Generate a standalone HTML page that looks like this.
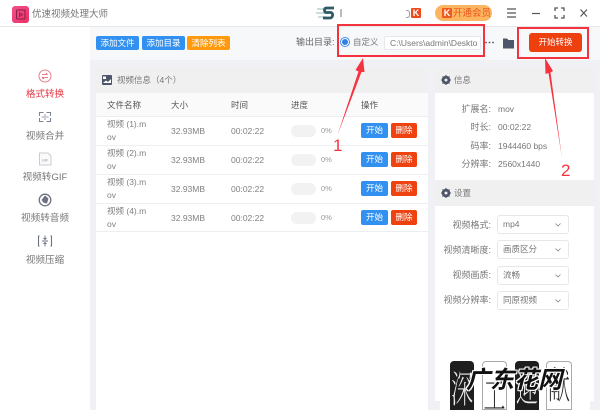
<!DOCTYPE html>
<html lang="zh">
<head>
<meta charset="utf-8">
<style>
html,body{margin:0;padding:0;width:600px;height:410px;overflow:hidden}
#w{position:absolute;left:0;top:0;width:600px;height:410px;overflow:hidden;background:#f0f1f5;font-family:"Liberation Sans","Noto Sans CJK SC",sans-serif;color:#666}
.a{position:absolute;white-space:nowrap}
.c{text-align:center}
.btn{position:absolute;color:#fff;border-radius:2px;text-align:center;white-space:nowrap}
.th{position:absolute;font-size:8.5px;color:#555;line-height:12px;white-space:nowrap}
.td{position:absolute;font-size:8.5px;color:#808080;line-height:12px;white-space:nowrap}
.sel{position:absolute;left:497px;width:70px;height:17px;background:#fff;border:1px solid #e6e7eb;border-radius:3px;box-sizing:content-box;font-size:8.5px;line-height:17px;color:#777}
.sel span{position:absolute;left:5px}
.sel svg{position:absolute;right:7px;top:7px}
.lb{position:absolute;width:91px;left:400px;text-align:right;font-size:9px;line-height:12px;color:#777;white-space:nowrap}
.v{position:absolute;left:498px;font-size:8.5px;line-height:12px;color:#777;white-space:nowrap}
.nav{position:absolute;left:0;width:90px;text-align:center;font-size:9.6px;line-height:14px;color:#777;white-space:nowrap}
.card{position:absolute;top:361px;height:49px;width:24px;border-radius:4px 4px 0 0;box-sizing:border-box;overflow:hidden;font-family:"Noto Serif CJK SC",serif;font-weight:200;text-align:center}
.card span{position:absolute;left:0;width:100%;font-size:22px;line-height:22px;transform-origin:50% 0;transform:scaleY(1.7)}
</style>
</head>
<body>
<div id="w">
<!-- title bar -->
<div class="a" style="left:0;top:0;width:600px;height:26px;background:#fff;border-bottom:1px solid #e6e7ea"></div>
<svg class="a" style="left:12px;top:6px" width="17" height="17" viewBox="0 0 17 17">
<defs><linearGradient id="g" x1="0" y1="0" x2="1" y2="1"><stop offset="0" stop-color="#f0508c"/><stop offset="1" stop-color="#ee2f62"/></linearGradient></defs>
<rect width="17" height="17" rx="3" fill="url(#g)"/>
<rect x="4.500" y="4" width="8.500" height="9" rx="1" fill="none" stroke="#8c1c4a" stroke-width="1"/>
<path d="M7.500 6.800v3.600l3-1.800z" fill="none" stroke="#8c1c4a" stroke-width=".8"/>
</svg>
<div class="a" style="left:32px;top:8px;font-size:9.500px;line-height:14px;color:#777">优速视频处理大师</div>

<!-- top right -->
<svg class="a" style="left:316px;top:5px" width="20" height="16" viewBox="0 0 20 16">
<path d="M1 4h10M0 8h9M2 12h8" stroke="#b9d3d2" stroke-width="1.600"/>
<path d="M18 3H10c-2 0-2 4 0 4.500h5c2.500 .5 2 5.500-1 5.500H7" fill="none" stroke="#2d5a66" stroke-width="2.800"/>
</svg>
<div class="a" style="left:340px;top:9px;width:4px;height:8px;border-left:2px solid #b8bcc0;box-sizing:border-box"></div>
<div class="a" style="left:406px;top:10px;width:3px;height:6px;border:1px solid #999;border-left:none;border-radius:0 3px 3px 0"></div>
<div class="a c" style="left:411px;top:8px;width:10px;height:10px;background:#ee4a1c;border-radius:1px;color:#fff;font-size:9px;line-height:10px;font-weight:bold">K</div>
<div class="a" style="left:435px;top:5px;width:57px;height:16px;background:#fdb561;border-radius:8px"></div>
<div class="a c" style="left:442px;top:8px;width:10px;height:10px;background:#ef5a1e;border-radius:1px;color:#fff;font-size:9px;line-height:10px;font-weight:bold">K</div>
<div class="a" style="left:453px;top:7px;font-size:9.500px;line-height:14px;color:#e8561a">开通会员</div>
<svg class="a" style="left:505px;top:6px" width="90" height="14" viewBox="0 0 90 14">
<path d="M2 3h9M2 7h9M2 11h9" stroke="#555" stroke-width="1.200"/>
<path d="M27 7.500h8" stroke="#555" stroke-width="1.200"/>
<path d="M50 5V2h3M56 2h3v3M59 9v3h-3M53 12h-3V9" fill="none" stroke="#555" stroke-width="1.300"/>
<path d="M75.500 3.500l6.500 7M82 3.500l-6.500 7" stroke="#555" stroke-width="1.200"/>
</svg>

<!-- sidebar -->
<div class="a" style="left:0;top:27px;width:90px;height:383px;background:#fff"></div>
<svg class="a" style="left:0;top:60px" width="90" height="200" viewBox="0 0 90 200">
<circle cx="45" cy="16" r="6" fill="#fff" stroke="#ee7f88" stroke-width="1"/>
<path d="M42 14.500h5.500M42 17.500h6M46 13l1.500 1.500M44 19l-2-1.500" fill="none" stroke="#e8556a" stroke-width=".8"/>
<path d="M39.500 56v-3.500h4M46.500 52.500h4V56M39.500 58v3.500h4M46.500 61.500h4V58" fill="none" stroke="#7d8494" stroke-width="1"/>
<path d="M41.500 57h2.500M46 57h2.500M45 54v6" stroke="#7d8494" stroke-width=".8" fill="none"/>
<path d="M39.500 93h8.500l3 3v9h-11.500z" fill="#fafafb" stroke="#c9ccd4" stroke-width="1"/>
<text x="45" y="101.500" font-size="3.500" fill="#8a8f9a" text-anchor="middle" font-family="Liberation Sans">GIF</text>
<circle cx="45" cy="140" r="5.800" fill="none" stroke="#6c7282" stroke-width="1.300"/>
<path d="M45 135.500l3.500 3-1.500 5-3 -.5-2.500-3z" fill="#6c7282"/>
<path d="M39.500 176h-1v10h1M50.500 176h1v10h-1" fill="none" stroke="#6c7282" stroke-width="1.100"/>
<path d="M45 175.500v3.500M43.500 178l1.500 1.500 1.500-1.500M42 181h6M45 186.500v-3.500M43.500 184l1.500-1.500 1.500 1.500" fill="none" stroke="#6c7282" stroke-width=".9"/>
</svg>
<div class="nav" style="top:88px;color:#e63946">格式转换</div>
<div class="nav" style="top:130px">视频合并</div>
<div class="nav" style="top:171px">视频转GIF</div>
<div class="nav" style="top:212px">视频转音频</div>
<div class="nav" style="top:254px">视频压缩</div>

<!-- toolbar -->
<div class="a" style="left:90px;top:27px;width:510px;height:33px;background:#f7f8fa"></div>
<div class="btn" style="left:96px;top:36px;width:43px;height:14px;background:#3291f0;font-size:8.500px;line-height:15px">添加文件</div>
<div class="btn" style="left:142px;top:36px;width:43px;height:14px;background:#3291f0;font-size:8.500px;line-height:15px">添加目录</div>
<div class="btn" style="left:187px;top:36px;width:43px;height:14px;background:#ff9a0e;font-size:8.500px;line-height:15px">清除列表</div>
<div class="a" style="left:296px;top:36px;font-size:9px;line-height:12px;color:#666">输出目录:</div>
<div class="a" style="left:340px;top:37px;width:10px;height:10px;border-radius:50%;border:1px solid #3b8fee;box-sizing:border-box;background:#fff"></div>
<div class="a" style="left:342px;top:39px;width:6px;height:6px;border-radius:50%;background:#2f7fe6"></div>
<div class="a" style="left:353px;top:36px;font-size:8.500px;line-height:12px;color:#777">自定义</div>
<div class="a" style="left:384px;top:36px;width:97px;height:14px;background:#fff;border:1px solid #e8e9ed;box-sizing:border-box;border-radius:2px"></div>
<div class="a" style="left:390px;top:36px;font-size:8.500px;line-height:14px;color:#777">C:\Users\admin\Deskto</div>
<svg class="a" style="left:484px;top:36px" width="32" height="14" viewBox="0 0 32 14">
<circle cx="2" cy="6.500" r=".9" fill="#555"/><circle cx="5.500" cy="6.500" r=".9" fill="#555"/><circle cx="9" cy="6.500" r=".9" fill="#555"/>
<path d="M19 2.500h4l1.500 1.500h5.500v8.500H19z" fill="#4d5568"/>
</svg>
<div class="btn" style="left:529px;top:33px;width:53px;height:19px;background:#ee3f0f;border-radius:3px;font-size:8.500px;line-height:19px">开始转换</div>

<!-- left panel -->
<div class="a" style="left:96px;top:67px;width:332px;height:343px;background:#fff"></div>
<div class="a" style="left:96px;top:67px;width:332px;height:26px;background:#f0f0f0"></div>
<svg class="a" style="left:102px;top:75px" width="10" height="10" viewBox="0 0 10 10">
<rect width="10" height="10" rx="1" fill="#4d5568"/><rect x="1" y="1.500" width="3" height="2.500" fill="#fff"/><path d="M1 8l3-2.500 2 1.500 3-3v4z" fill="#fff"/>
</svg>
<div class="a" style="left:117px;top:74px;font-size:8.500px;line-height:12px;color:#777">视频信息（4个）</div>
<div class="a" style="left:96px;top:93px;width:332px;height:23px;background:#fafafa;border-bottom:1px solid #eceef2"></div>
<div class="th" style="left:107px;top:99px">文件名称</div>
<div class="th" style="left:171px;top:99px">大小</div>
<div class="th" style="left:231px;top:99px">时间</div>
<div class="th" style="left:291px;top:99px">进度</div>
<div class="th" style="left:361px;top:99px">操作</div>

<!-- row 1 -->
<div class="td" style="left:107px;top:118px;line-height:13px">视频 (1).m<br>ov</div>
<div class="td" style="left:171px;top:125px">32.93MB</div>
<div class="td" style="left:231px;top:125px">00:02:22</div>
<div class="a" style="left:291px;top:125px;width:25px;height:12px;background:#f2f2f2;border-radius:6px"></div>
<div class="a" style="left:321px;top:126px;font-size:7.500px;line-height:10px;color:#999">0%</div>
<div class="btn" style="left:361px;top:123px;width:27px;height:15px;background:#3291f0;font-size:8.500px;line-height:15px">开始</div>
<div class="btn" style="left:391px;top:123px;width:26px;height:15px;background:#ee4210;font-size:8.500px;line-height:15px">删除</div>
<div class="a" style="left:96px;top:145px;width:332px;height:1px;background:#eceef2"></div>
<!-- row 2 -->
<div class="td" style="left:107px;top:147px;line-height:13px">视频 (2).m<br>ov</div>
<div class="td" style="left:171px;top:154px">32.93MB</div>
<div class="td" style="left:231px;top:154px">00:02:22</div>
<div class="a" style="left:291px;top:154px;width:25px;height:12px;background:#f2f2f2;border-radius:6px"></div>
<div class="a" style="left:321px;top:155px;font-size:7.500px;line-height:10px;color:#999">0%</div>
<div class="btn" style="left:361px;top:152px;width:27px;height:15px;background:#3291f0;font-size:8.500px;line-height:15px">开始</div>
<div class="btn" style="left:391px;top:152px;width:26px;height:15px;background:#ee4210;font-size:8.500px;line-height:15px">删除</div>
<div class="a" style="left:96px;top:174px;width:332px;height:1px;background:#eceef2"></div>
<!-- row 3 -->
<div class="td" style="left:107px;top:176px;line-height:13px">视频 (3).m<br>ov</div>
<div class="td" style="left:171px;top:183px">32.93MB</div>
<div class="td" style="left:231px;top:183px">00:02:22</div>
<div class="a" style="left:291px;top:183px;width:25px;height:12px;background:#f2f2f2;border-radius:6px"></div>
<div class="a" style="left:321px;top:184px;font-size:7.500px;line-height:10px;color:#999">0%</div>
<div class="btn" style="left:361px;top:181px;width:27px;height:15px;background:#3291f0;font-size:8.500px;line-height:15px">开始</div>
<div class="btn" style="left:391px;top:181px;width:26px;height:15px;background:#ee4210;font-size:8.500px;line-height:15px">删除</div>
<div class="a" style="left:96px;top:203px;width:332px;height:1px;background:#eceef2"></div>
<!-- row 4 -->
<div class="td" style="left:107px;top:205px;line-height:13px">视频 (4).m<br>ov</div>
<div class="td" style="left:171px;top:212px">32.93MB</div>
<div class="td" style="left:231px;top:212px">00:02:22</div>
<div class="a" style="left:291px;top:212px;width:25px;height:12px;background:#f2f2f2;border-radius:6px"></div>
<div class="a" style="left:321px;top:213px;font-size:7.500px;line-height:10px;color:#999">0%</div>
<div class="btn" style="left:361px;top:210px;width:27px;height:15px;background:#3291f0;font-size:8.500px;line-height:15px">开始</div>
<div class="btn" style="left:391px;top:210px;width:26px;height:15px;background:#ee4210;font-size:8.500px;line-height:15px">删除</div>
<div class="a" style="left:96px;top:231px;width:332px;height:1px;background:#eceef2"></div>

<!-- right panel -->
<div class="a" style="left:435px;top:67px;width:159px;height:343px;background:#fff"></div>
<div class="a" style="left:435px;top:67px;width:159px;height:26px;background:#f0f0f0"></div>
<div class="a" style="left:435px;top:180px;width:159px;height:26px;background:#f0f0f0"></div>
<svg class="a" style="left:441px;top:75px" width="10" height="10" viewBox="0 0 10 10">
<circle cx="5" cy="5" r="3.200" fill="none" stroke="#4d5568" stroke-width="2.200"/><path d="M5 0v10M0 5h10M1.500 1.500l7 7M8.500 1.500l-7 7" stroke="#4d5568" stroke-width="1.100"/><circle cx="5" cy="5" r="1.300" fill="#f0f0f0"/>
</svg>
<svg class="a" style="left:441px;top:188px" width="10" height="10" viewBox="0 0 10 10">
<circle cx="5" cy="5" r="3.200" fill="none" stroke="#4d5568" stroke-width="2.200"/><path d="M5 0v10M0 5h10M1.500 1.500l7 7M8.500 1.500l-7 7" stroke="#4d5568" stroke-width="1.100"/><circle cx="5" cy="5" r="1.300" fill="#f0f0f0"/>
</svg>
<div class="a" style="left:454px;top:74px;font-size:8.500px;line-height:12px;color:#777">信息</div>
<div class="a" style="left:454px;top:187px;font-size:8.500px;line-height:12px;color:#777">设置</div>

<div class="lb" style="top:103px">扩展名:</div><div class="v" style="top:103px">mov</div>
<div class="lb" style="top:121px">时长:</div><div class="v" style="top:121px">00:02:22</div>
<div class="lb" style="top:140px">码率:</div><div class="v" style="top:140px">1944460 bps</div>
<div class="lb" style="top:158px">分辨率:</div><div class="v" style="top:158px">2560x1440</div>

<div class="lb" style="top:219px">视频格式:</div>
<div class="sel" style="top:215px"><span>mp4</span><svg width="6" height="4" viewBox="0 0 6 4"><path d="M.5 .5L3 3l2.500-2.500" fill="none" stroke="#888" stroke-width=".8"/></svg></div>
<div class="lb" style="top:244px">视频清晰度:</div>
<div class="sel" style="top:240px"><span>画质区分</span><svg width="6" height="4" viewBox="0 0 6 4"><path d="M.5 .5L3 3l2.500-2.500" fill="none" stroke="#888" stroke-width=".8"/></svg></div>
<div class="lb" style="top:269px">视频画质:</div>
<div class="sel" style="top:266px"><span>流畅</span><svg width="6" height="4" viewBox="0 0 6 4"><path d="M.5 .5L3 3l2.500-2.500" fill="none" stroke="#888" stroke-width=".8"/></svg></div>
<div class="lb" style="top:294px">视频分辨率:</div>
<div class="sel" style="top:291px"><span>同原视频</span><svg width="6" height="4" viewBox="0 0 6 4"><path d="M.5 .5L3 3l2.500-2.500" fill="none" stroke="#888" stroke-width=".8"/></svg></div>

<!-- watermark -->
<div class="a" style="left:435px;top:401px;width:5px;height:9px;background:#f0f1f5"></div>
<div class="a" style="left:590px;top:401px;width:4px;height:9px;background:#f0f1f5"></div>
<div class="card" style="left:450px;background:#1e1e1e;color:#eee"><span style="top:9px">深</span></div>
<div class="card" style="left:482px;width:25px;background:#fff;border:1px solid #aaa;color:#222"><span style="top:14px">工</span></div>
<div class="card" style="left:515px;width:24px;background:#1e1e1e;color:#eee"><span style="top:8px">迎</span></div>
<div class="card" style="left:546px;width:26px;background:#fff;border:1px solid #aaa;color:#222"><span style="top:4px">献</span></div>
<div class="a" style="left:466px;top:366px;font-size:24px;line-height:30px;font-weight:bold;font-style:italic;color:#111;text-shadow:-1px -1px 0 #fff,1px -1px 0 #fff,-1px 1px 0 #fff,1px 1px 0 #fff,0 -1px 0 #fff,0 1px 0 #fff,-1px 0 0 #fff,1px 0 0 #fff">广东花网</div>

<!-- annotations -->
<div class="a" style="left:337px;top:24px;width:148px;height:33px;border:2px solid #f5333f;box-sizing:border-box"></div>
<div class="a" style="left:517px;top:27px;width:72px;height:32px;border:2px solid #f5333f;box-sizing:border-box"></div>
<svg class="a" style="left:0;top:0" width="600" height="410" viewBox="0 0 600 410">
<path d="M337.500 135L358.500 71.500 355.500 70 363 58 364.500 72 361.500 72z" fill="#f5333f"/>
<path d="M562 158L548.500 73 545.500 74 545 58 553 71 550.500 72.500z" fill="#f5333f"/>
</svg>
<div class="a" style="left:333px;top:136px;font-size:17px;line-height:20px;color:#f5333f">1</div>
<div class="a" style="left:561px;top:161px;font-size:17px;line-height:20px;color:#f5333f">2</div>
</div>
</body>
</html>
